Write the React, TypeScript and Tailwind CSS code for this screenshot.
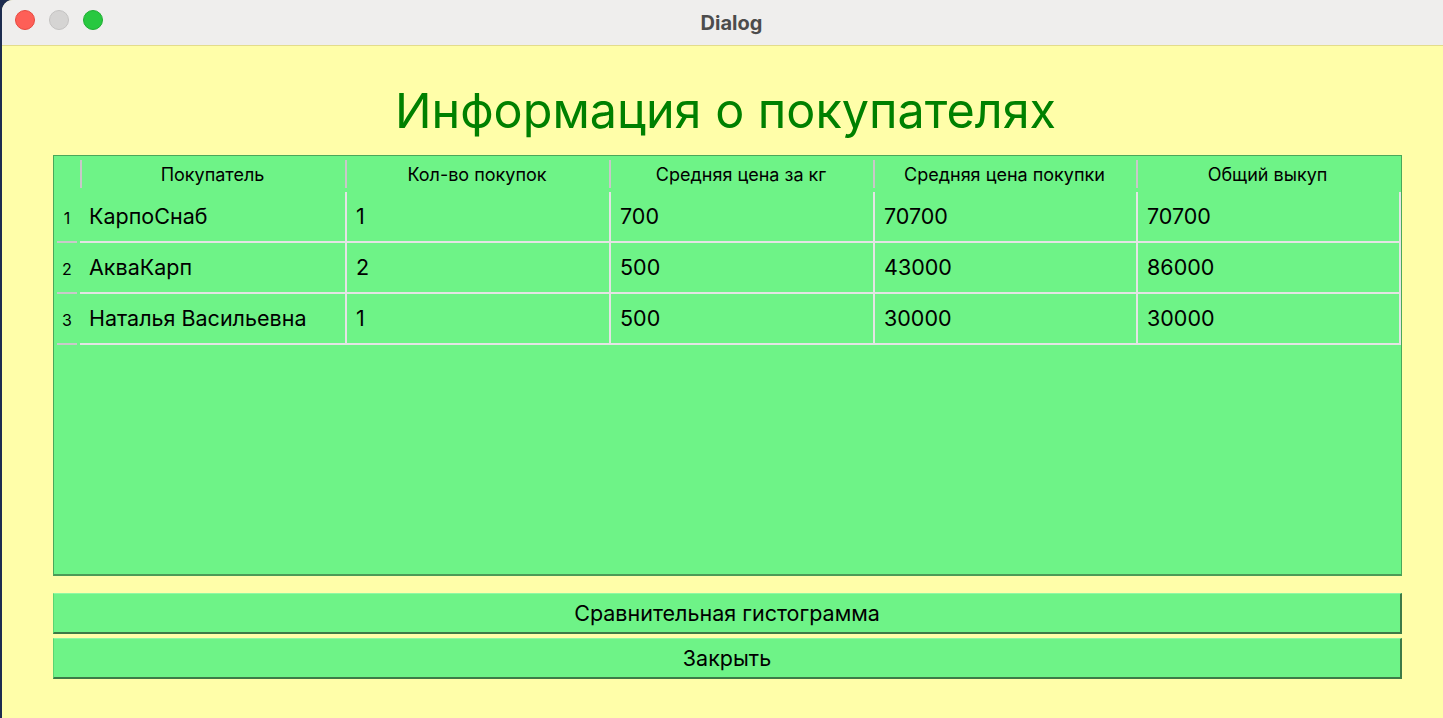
import React from "react";

const rows = [
  ["КарпоСнаб", "1", "700", "70700", "70700"],
  ["АкваКарп", "2", "500", "43000", "86000"],
  ["Наталья Васильевна", "1", "500", "30000", "30000"],
];

const headers = [
  "Покупатель",
  "Кол-во покупок",
  "Средняя цена за кг",
  "Средняя цена покупки",
  "Общий выкуп",
];

const widths = ["w-[265px]", "w-[264px]", "w-[264px]", "w-[263px]", "w-[263px]"];

const App = () => {
  return (
    <div className="w-[1443px] h-[718px] bg-[#1d2c4f] overflow-hidden font-['Inter',sans-serif]">
      <div className="ml-[2px] h-full flex flex-col rounded-tl-[11px] overflow-hidden bg-[#fffea9]">
        {/* title bar */}
        <div className="relative h-[46px] shrink-0 bg-[#efeeed] border-b border-[#e3dc8c] flex items-center justify-center">
          <div className="absolute left-[13px] top-[10px] flex gap-[14px]">
            <div className="w-[20px] h-[20px] rounded-full bg-[#fe5f57] border border-[#e5493f]" />
            <div className="w-[20px] h-[20px] rounded-full bg-[#d5d4d3] border border-[#c3c2c1]" />
            <div className="w-[20px] h-[20px] rounded-full bg-[#28c840] border border-[#1fae33]" />
          </div>
          <div className="text-[20px] font-bold text-[#4c4c4c] ml-[18px]">Dialog</div>
        </div>

        <div className="flex-1 flex flex-col px-[51px]">
          <h1 className="mt-[40px] h-[49px] leading-[49px] text-center text-[48.5px] text-[#008000] ml-[6px]">
            Информация о покупателях
          </h1>

          {/* table */}
          <div className="mt-[20px] h-[421px] w-[1349px] border border-[#4aa85a] border-b-2 border-b-[#4c9b57] bg-[#6ef387] flex">
            <div className="w-[27px] flex flex-col">
              <div className="h-[36px]" />
              {rows.map((_, i) => (
                <div key={i} className="h-[51px] relative flex items-center justify-center text-[16px] text-black">
                  {i + 1}
                  <div className="absolute bottom-0 left-[3px] right-[3px] h-[2px] bg-[#c9c9c9]" />
                </div>
              ))}
            </div>
            <div className="flex-1 flex flex-col">
              <div className="h-[36px] flex">
                {headers.map((h, i) => (
                  <div key={h} className={`${widths[i]} h-full relative flex items-center justify-center text-[18px] text-black`}>
                    <div className="absolute left-0 top-[4px] bottom-[4px] w-[2px] bg-[#c8c8c8]" />
                    {h}
                  </div>
                ))}
              </div>
              {rows.map((r, ri) => (
                <div key={ri} className="h-[51px] flex border-b-2 border-[#e4e4e4]">
                  {r.map((c, ci) => (
                    <div
                      key={ci}
                      className={`${widths[ci]} h-full flex items-center pl-[9px] text-[21.5px] text-black ${ci > 0 ? "border-l-2 border-[#e4e4e4]" : ""}`}
                    >
                      {c}
                    </div>
                  ))}
                  <div className="w-[2px] h-full bg-[#e4e4e4]" />
                </div>
              ))}
            </div>
          </div>

          <button className="mt-[17px] h-[41px] w-[1349px] bg-[#6ef387] border border-t-[#8ff8a3] border-l-[#5bd571] border-r-2 border-r-[#3d7a47] border-b-2 border-b-[#3d7a47] text-[21.5px] text-black">
            Сравнительная гистограмма
          </button>
          <button className="mt-[4px] h-[41px] w-[1349px] bg-[#6ef387] border border-t-[#8ff8a3] border-l-[#5bd571] border-r-2 border-r-[#3d7a47] border-b-2 border-b-[#3d7a47] text-[21.5px] text-black">
            Закрыть
          </button>
        </div>
      </div>
    </div>
  );
};

export default App;
